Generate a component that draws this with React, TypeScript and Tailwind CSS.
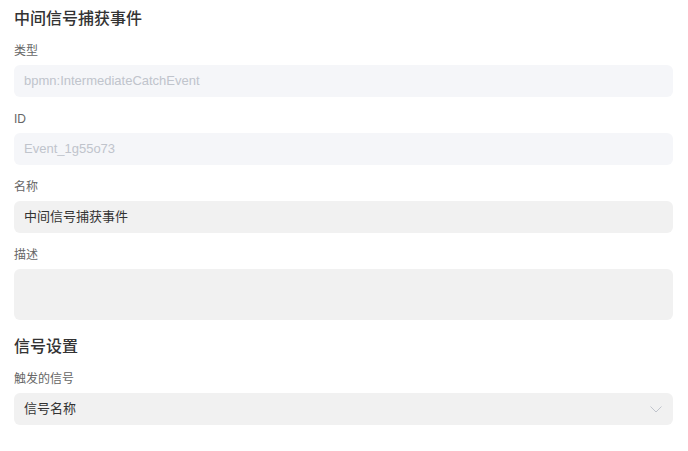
const font = "font-['Liberation_Sans','Noto_Sans_CJK_SC',sans-serif]";

function Label({ text }: { text: string }) {
  return <div className="h-5 mb-1 text-xs leading-5 text-[#666]">{text}</div>;
}

function Field({ label, children }: { label: string; children: React.ReactNode }) {
  return (
    <div>
      <Label text={label} />
      {children}
    </div>
  );
}

export default function App() {
  return (
    <div className={`${font} w-[688px] h-[451px] bg-white pl-[14px] pr-[15px] pt-[6px]`}>
      <h2 className="h-6 leading-6 text-[16px] font-medium text-[#333] mb-[11px] pt-px">中间信号捕获事件</h2>

      <div className="flex flex-col gap-3">
        <Field label="类型">
          <div className="h-8 rounded-md bg-[#f5f6f9] px-[10px] flex items-center text-[13px] text-[#c0c4cc]">
            bpmn:IntermediateCatchEvent
          </div>
        </Field>
        <Field label="ID">
          <div className="h-8 rounded-md bg-[#f5f6f9] px-[10px] flex items-center text-[13px] text-[#c0c4cc]">
            Event_1g55o73
          </div>
        </Field>
        <Field label="名称">
          <div className="h-8 rounded-md bg-[#f1f1f1] px-[10px] flex items-center text-[13px] text-[#333]">
            中间信号捕获事件
          </div>
        </Field>
        <Field label="描述">
          <div className="h-[51px] rounded-md bg-[#f1f1f1]" />
        </Field>
      </div>

      <h2 className="h-6 leading-6 text-[16px] font-medium text-[#333] mt-[14px] mb-[11px] pt-px">信号设置</h2>

      <Field label="触发的信号">
        <div className="h-8 rounded-md bg-[#f1f1f1] pl-[10px] pr-[11px] flex items-center justify-between text-[13px] text-[#333]">
          <span>信号名称</span>
          <svg width="12" height="7" viewBox="0 0 12 7" fill="none">
            <path d="M0.5 0.5 L6 6 L11.5 0.5" stroke="#c0c4cc" strokeWidth="1" />
          </svg>
        </div>
      </Field>
    </div>
  );
}
